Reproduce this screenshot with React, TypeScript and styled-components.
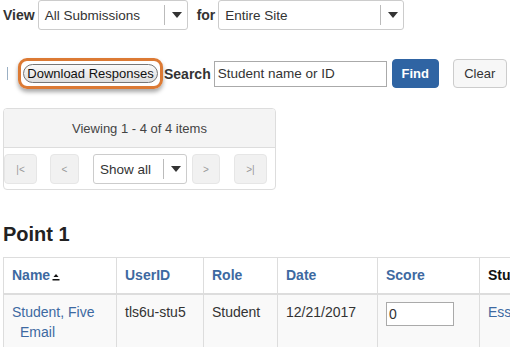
import styled, { createGlobalStyle } from "styled-components";

const colors = {
  text: "#333333",
  link: "#3d69a1",
  border: "#dddddd",
  field: "#aaaaaa",
  primary: "#2f64a3",
  orange: "#dc7a34",
};

const GlobalStyle = createGlobalStyle`
  html, body {
    margin: 0;
    padding: 0;
    background: #fff;
    overflow: hidden;
  }
  body {
    font-family: "Liberation Sans", Arial, sans-serif;
    font-size: 14px;
    color: ${colors.text};
  }
`;

const Page = styled.div`
  width: 510px;
  height: 347px;
  padding-left: 3px;
  box-sizing: border-box;
  overflow: hidden;
`;

const Toolbar = styled.div`
  display: flex;
  align-items: center;
  height: 30px;
  & > * {
    flex-shrink: 0;
  }
`;

const Label = styled.span`
  font-weight: bold;
  margin-right: 3px;
`;

const Select = styled.div<{ $w: number }>`
  width: ${(p) => p.$w}px;
  height: 30px;
  box-sizing: border-box;
  border: 1px solid #cccccc;
  border-radius: 3px;
  display: flex;
  align-items: center;
  padding-left: 6px;
  background: #fff;
  color: ${colors.text};
  font-size: 13.5px;
  margin-right: 9px;
`;

const SelectText = styled.span`
  flex: 1;
  white-space: nowrap;
`;

const Caret = styled.span`
  width: 22px;
  height: 20px;
  border-left: 1px solid #bbbbbb;
  display: flex;
  align-items: center;
  justify-content: center;
  &::after {
    content: "";
    border-left: 5px solid transparent;
    border-right: 5px solid transparent;
    border-top: 6px solid #333;
    margin-left: 2px;
  }
`;

const SearchRow = styled(Toolbar)`
  margin-top: 28px;
  height: 31px;
`;

const Pipe = styled.span`
  width: 1px;
  height: 13px;
  background: #9bb0c4;
  margin-left: 4px;
  margin-right: 10px;
`;

const Highlight = styled.span`
  display: inline-flex;
  padding: 3px 2px;
  border: 3px solid ${colors.orange};
  border-radius: 9px;
  box-shadow: 0 3px 4px rgba(0, 0, 0, 0.35);
  margin-right: 1px;
`;

const PillButton = styled.button`
  width: 135px;
  height: 19px;
  padding: 0;
  border: 1px solid #767676;
  border-radius: 10px;
  background: linear-gradient(#fafafa, #dedede);
  font-family: inherit;
  font-size: 13px;
  color: #111;
  line-height: 17px;
  white-space: nowrap;
`;

const TextInput = styled.div`
  width: 173px;
  height: 26px;
  box-sizing: border-box;
  border: 1px solid ${colors.field};
  display: flex;
  align-items: center;
  padding-left: 3px;
  font-size: 13.5px;
  white-space: nowrap;
`;

const Button = styled.button<{ $primary?: boolean; $w: number }>`
  width: ${(p) => p.$w}px;
  height: 29px;
  box-sizing: border-box;
  padding: 0;
  border-radius: 4px;
  font-family: inherit;
  font-size: 13px;
  border: 1px solid ${(p) => (p.$primary ? colors.primary : "#cccccc")};
  background: ${(p) => (p.$primary ? colors.primary : "#f7f7f7")};
  color: ${(p) => (p.$primary ? "#fff" : colors.text)};
  font-weight: ${(p) => (p.$primary ? "bold" : "normal")};
  margin-left: ${(p) => (p.$primary ? 5 : 14)}px;
`;

const Pager = styled.div`
  width: 273px;
  margin-top: 19px;
  border: 1px solid #dddddd;
  border-radius: 4px;
  box-sizing: border-box;
  overflow: hidden;
`;

const PagerHeader = styled.div`
  height: 39px;
  background: #f4f4f4;
  border-bottom: 1px solid #dddddd;
  display: flex;
  align-items: center;
  justify-content: center;
  font-size: 13px;
  color: #444;
  box-sizing: border-box;
`;

const PagerBody = styled.div`
  display: flex;
  align-items: center;
  padding: 6px 0 5px 0;
`;

const NavButton = styled.span<{ $w: number; $ml: number }>`
  width: ${(p) => p.$w}px;
  height: 30px;
  margin-left: ${(p) => p.$ml}px;
  box-sizing: border-box;
  background: #f1f1f1;
  border: 1px solid #e6e6e6;
  border-radius: 4px;
  display: flex;
  align-items: center;
  justify-content: center;
  font-size: 10px;
  color: #999;
`;

const PageSelect = styled(Select)`
  margin-left: 14px;
  margin-right: 0;
`;

const Heading = styled.h2`
  margin: 33px 0 11px 0;
  font-size: 20px;
  line-height: 23px;
  font-weight: bold;
  color: #222;
`;

const Table = styled.table`
  border-collapse: collapse;
  table-layout: fixed;
  width: 560px;
`;

const Th = styled.th<{ $w: number; $plain?: boolean }>`
  width: ${(p) => p.$w}px;
  height: 36px;
  box-sizing: border-box;
  border: 1px solid ${colors.border};
  border-bottom: 2px solid ${colors.border};
  text-align: left;
  padding: 0 8px;
  font-weight: bold;
  color: ${(p) => (p.$plain ? "#111" : colors.link)};
  white-space: nowrap;
  overflow: hidden;
`;

const Row = styled.tr`
  background: #f9f9f9;
`;

const Td = styled.td`
  border: 1px solid ${colors.border};
  padding: 7px 8px 10px 8px;
  vertical-align: top;
  line-height: 20px;
  white-space: nowrap;
  overflow: hidden;
`;

const Link = styled.a<{ $indent?: boolean }>`
  display: block;
  color: ${colors.link};
  text-decoration: none;
  padding-left: ${(p) => (p.$indent ? 8 : 0)}px;
`;

const ScoreInput = styled.div`
  width: 68px;
  height: 24px;
  box-sizing: border-box;
  border: 1px solid ${colors.field};
  background: #fff;
  padding-left: 2px;
  line-height: 22px;
`;

const SortIcon = () => (
  <svg width="8" height="8" viewBox="0 0 8 8" style={{ marginLeft: 2, verticalAlign: -1 }}>
    <path d="M4 1 L6.5 4 H1.5 Z" fill="#111" />
    <rect x="0.5" y="6" width="7" height="1.5" fill="#111" />
  </svg>
);

export default function App() {
  return (
    <Page>
      <GlobalStyle />
      <Toolbar>
        <Label>View</Label>
        <Select $w={150}>
          <SelectText>All Submissions</SelectText>
          <Caret />
        </Select>
        <Label>for</Label>
        <Select $w={186}>
          <SelectText>Entire Site</SelectText>
          <Caret />
        </Select>
      </Toolbar>

      <SearchRow>
        <Pipe />
        <Highlight>
          <PillButton>Download Responses</PillButton>
        </Highlight>
        <Label>Search</Label>
        <TextInput>Student name or ID</TextInput>
        <Button $primary $w={47}>
          Find
        </Button>
        <Button $w={54}>Clear</Button>
      </SearchRow>

      <Pager>
        <PagerHeader>Viewing 1 - 4 of 4 items</PagerHeader>
        <PagerBody>
          <NavButton $w={33} $ml={0}>|&lt;</NavButton>
          <NavButton $w={29} $ml={13}>&lt;</NavButton>
          <PageSelect $w={94}>
            <SelectText>Show all</SelectText>
            <Caret />
          </PageSelect>
          <NavButton $w={28} $ml={5}>&gt;</NavButton>
          <NavButton $w={33} $ml={14}>&gt;|</NavButton>
        </PagerBody>
      </Pager>

      <Heading>Point 1</Heading>

      <Table>
        <thead>
          <tr>
            <Th $w={113}>
              Name
              <SortIcon />
            </Th>
            <Th $w={87}>UserID</Th>
            <Th $w={74}>Role</Th>
            <Th $w={100}>Date</Th>
            <Th $w={102}>Score</Th>
            <Th $w={84} $plain>
              Student Response
            </Th>
          </tr>
        </thead>
        <tbody>
          <Row>
            <Td>
              <Link href="#">Student, Five</Link>
              <Link href="#" $indent>
                Email
              </Link>
            </Td>
            <Td>tls6u-stu5</Td>
            <Td>Student</Td>
            <Td>12/21/2017</Td>
            <Td>
              <ScoreInput>0</ScoreInput>
            </Td>
            <Td>
              <Link href="#">Essay</Link>
            </Td>
          </Row>
        </tbody>
      </Table>
    </Page>
  );
}
